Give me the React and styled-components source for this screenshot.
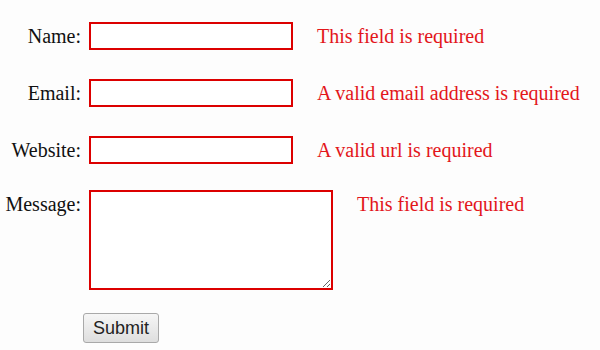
import React from 'react'
import styled, { createGlobalStyle } from 'styled-components'

const GlobalStyle = createGlobalStyle`
    body {
        margin: 0;
        background-color: #fdfdfd;
        font-family: "Liberation Serif", "Times New Roman", serif;
    }
`

const fields = [
    { label: 'Name:', error: 'This field is required' },
    { label: 'Email:', error: 'A valid email address is required' },
    { label: 'Website:', error: 'A valid url is required' },
]

export default function App() {
    return (
        <>
            <GlobalStyle />
            <Form onSubmit={e => e.preventDefault()}>
                {fields.map(field => (
                    <Row key={field.label}>
                        <Label>{field.label}</Label>
                        <Input type="text" />
                        <Error>{field.error}</Error>
                    </Row>
                ))}
                <Row top>
                    <Label>Message:</Label>
                    <TextArea />
                    <Error>This field is required</Error>
                </Row>
                <Actions>
                    <Button type="submit">Submit</Button>
                </Actions>
            </Form>
        </>
    )
}

const Form = styled.form`
    display: flex;
    flex-direction: column;
    padding: 22px 0 0 3px;
`

const Row = styled.div`
    display: flex;
    align-items: ${props => props.top ? 'flex-start' : 'center'};
    gap: 8px;
    margin-bottom: ${props => props.top ? 23 : 29}px;

    &:nth-child(3) {
        margin-bottom: 26px;
    }
`

const Label = styled.label`
    width: 78px;
    text-align: right;
    font-size: 20px;
    line-height: 28px;
    color: #111;
    white-space: nowrap;
`

const Input = styled.input`
    width: 204px;
    height: 28px;
    box-sizing: border-box;
    border: 2px solid #dc0000;
    background-color: #fff;
    outline: none;
    margin: 0;
`

const TextArea = styled.textarea`
    width: 244px;
    height: 100px;
    box-sizing: border-box;
    border: 2px solid #dc0000;
    background-color: #fff;
    outline: none;
    margin: 0;
`

const Error = styled.span`
    margin-left: 16px;
    font-size: 20px;
    line-height: 28px;
    color: #e3161b;
    white-space: nowrap;
`

const Actions = styled.div`
    display: flex;
    padding-left: 80px;
`

const Button = styled.button`
    width: 76px;
    height: 30px;
    font-family: "Liberation Sans", Arial, sans-serif;
    font-size: 18px;
    color: #222;
    border: 1px solid #a9a9a9;
    border-radius: 3px;
    background: linear-gradient(#f6f6f6, #dedede);
    padding: 0;
`
